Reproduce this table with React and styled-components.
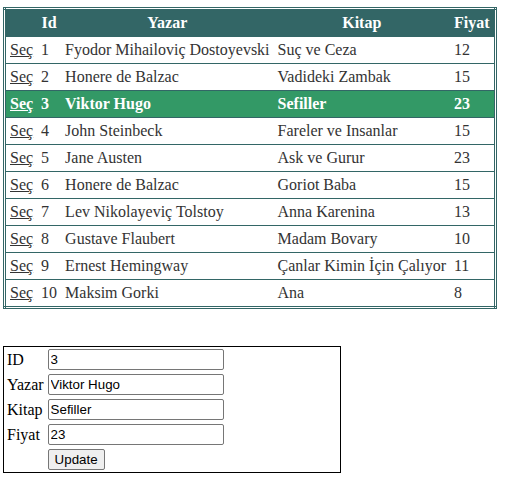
import React from "react";
import styled, { createGlobalStyle } from "styled-components";

const GlobalStyle = createGlobalStyle`
  html, body { margin: 0; padding: 0; background: #ffffff; }
  body { font-family: "Liberation Serif", "Times New Roman", serif; font-size: 16px; color: #000; }
`;

const Page = styled.div`
  padding: 7px 0 0 3px;
  display: flex;
  flex-direction: column;
  align-items: flex-start;
  gap: 37px;
`;

const Grid = styled.table`
  border-collapse: collapse;
  border: 3px double #336666;
  background: #ffffff;
  color: #333333;
  font-family: "Liberation Serif", "Times New Roman", serif;
  font-size: 16px;
`;

const HeadCell = styled.th`
  background: #336666;
  color: #ffffff;
  font-weight: bold;
  text-align: center;
  padding: 4px;
  border-top: 1px solid #336666;
  border-bottom: 1px solid #336666;
  line-height: 18px;
`;

const Row = styled.tr`
  background: ${(p) => (p.$selected ? "#339966" : "#ffffff")};
  color: ${(p) => (p.$selected ? "#ffffff" : "#333333")};
  font-weight: ${(p) => (p.$selected ? "bold" : "normal")};
`;

const Cell = styled.td`
  padding: 4px;
  border-top: 1px solid #336666;
  border-bottom: 1px solid #336666;
  text-align: left;
  white-space: nowrap;
  line-height: 18px;
`;

const SelectLink = styled.a`
  color: inherit;
  text-decoration: underline;
  cursor: pointer;
`;

const FormBox = styled.div`
  box-sizing: border-box;
  width: 338px;
  border: 1px solid #000000;
  padding: 2px 3px 2px 3px;
`;

const FieldGrid = styled.div`
  display: grid;
  grid-template-columns: auto 176px;
  column-gap: 4px;
  row-gap: 4px;
  align-items: center;
  justify-content: start;
`;

const Label = styled.label`
  font-family: "Liberation Serif", "Times New Roman", serif;
  font-size: 16px;
  color: #000;
  line-height: 18px;
`;

const TextInput = styled.input`
  box-sizing: border-box;
  width: 176px;
  height: 21px;
  padding: 1px 2px;
  border: 1px solid #767676;
  border-radius: 2px;
  font-family: "Liberation Sans", Arial, sans-serif;
  font-size: 13.333px;
  color: #000;
  background: #fff;
`;

const Button = styled.button`
  grid-column: 2;
  justify-self: start;
  height: 21px;
  padding: 1px 6px;
  border: 1px solid #767676;
  border-radius: 2px;
  background: #efefef;
  font-family: "Liberation Sans", Arial, sans-serif;
  font-size: 13.333px;
  color: #000;
`;

const books = [
  [1, "Fyodor Mihailoviç Dostoyevski", "Suç ve Ceza", 12],
  [2, "Honere de Balzac", "Vadideki Zambak", 15],
  [3, "Viktor Hugo", "Sefiller", 23],
  [4, "John Steinbeck", "Fareler ve Insanlar", 15],
  [5, "Jane Austen", "Ask ve Gurur", 23],
  [6, "Honere de Balzac", "Goriot Baba", 15],
  [7, "Lev Nikolayeviç Tolstoy", "Anna Karenina", 13],
  [8, "Gustave Flaubert", "Madam Bovary", 10],
  [9, "Ernest Hemingway", "Çanlar Kimin İçin Çalıyor", 11],
  [10, "Maksim Gorki", "Ana", 8],
];

export default function App() {
  const selected = 3;
  return (
    <>
      <GlobalStyle />
      <Page>
        <Grid>
          <thead>
            <tr>
              <HeadCell>&nbsp;</HeadCell>
              <HeadCell>Id</HeadCell>
              <HeadCell>Yazar</HeadCell>
              <HeadCell>Kitap</HeadCell>
              <HeadCell>Fiyat</HeadCell>
            </tr>
          </thead>
          <tbody>
            {books.map(([id, author, book, price]) => (
              <Row key={id} $selected={id === selected}>
                <Cell>
                  <SelectLink>Seç</SelectLink>
                </Cell>
                <Cell>{id}</Cell>
                <Cell>{author}</Cell>
                <Cell>{book}</Cell>
                <Cell>{price}</Cell>
              </Row>
            ))}
          </tbody>
        </Grid>
        <FormBox>
          <FieldGrid>
            <Label>ID</Label>
            <TextInput defaultValue="3" />
            <Label>Yazar</Label>
            <TextInput defaultValue="Viktor Hugo" />
            <Label>Kitap</Label>
            <TextInput defaultValue="Sefiller" />
            <Label>Fiyat</Label>
            <TextInput defaultValue="23" />
            <Button>Update</Button>
          </FieldGrid>
        </FormBox>
      </Page>
    </>
  );
}
